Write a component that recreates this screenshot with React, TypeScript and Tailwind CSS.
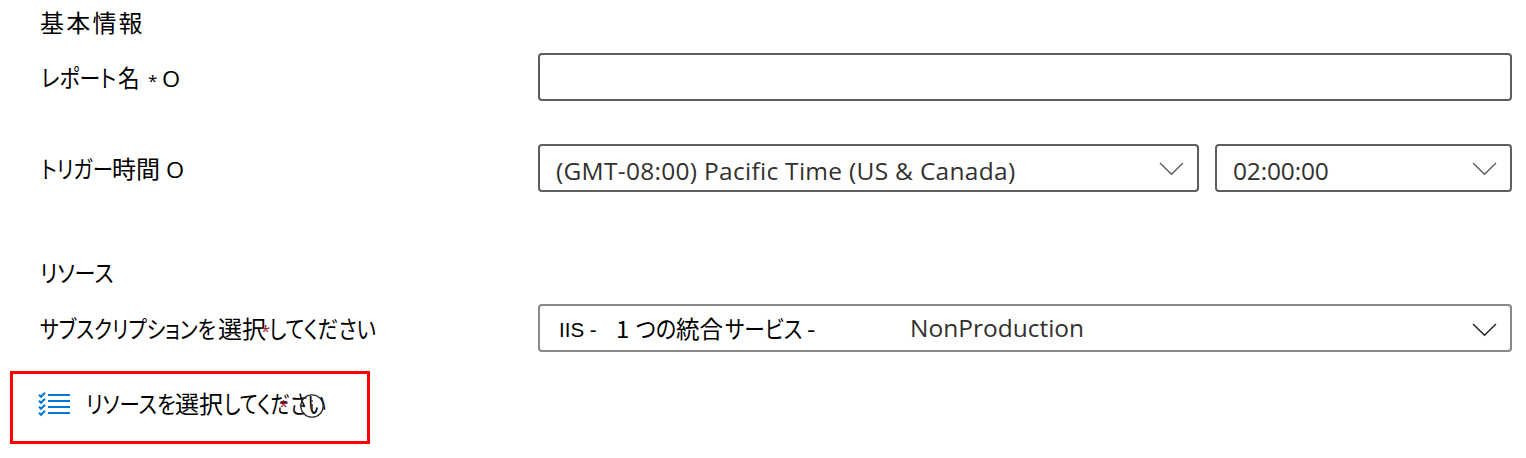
import type { ReactNode } from "react";

const jp = "font-['Noto_Sans_CJK_JP',sans-serif] text-[24px] leading-[32px] text-black";
const ui = "font-['Open_Sans',sans-serif] text-[24.5px] leading-[32px] text-[#323130]";

/** A run of glyphs in a fixed-width slot, condensed horizontally from its left edge. */
function Run({ slot, fit = "", children }: { slot: string; fit?: string; children: ReactNode }) {
  return (
    <span className={`inline-block shrink-0 whitespace-pre text-left ${slot}`}>
      <span className={`inline-block origin-left [font-feature-settings:'palt'] ${fit}`}>{children}</span>
    </span>
  );
}

function Chevron({ dark = false }: { dark?: boolean }) {
  return (
    <svg className={dark ? "mt-[3px] shrink-0" : "mt-px shrink-0"} width="25" height="14" viewBox="0 0 25 14" fill="none">
      <path d="M1 1L12.5 12.3L24 1" stroke={dark ? "#201f1e" : "#605e5c"} strokeWidth="1.4" />
    </svg>
  );
}

function Checklist() {
  return (
    <svg className="shrink-0" width="33" height="26" viewBox="0 0 33 26" fill="none" stroke="#0078d4">
      {[4, 10, 16, 22].map((y) => (
        <g key={y}>
          <path d={`M10 ${y}H32`} strokeWidth="2" />
          <path d={`M1 ${y - 0.2}L3 ${y + 1.8}L7 ${y - 2.2}`} strokeWidth="2" />
        </g>
      ))}
    </svg>
  );
}

function Required({ place }: { place: string }) {
  return <span className={`absolute font-['Open_Sans',sans-serif] text-[17px] leading-none text-[#a4262c] ${place}`}>*</span>;
}

function Hint() {
  return <span className="inline-block origin-left scale-x-[1.06] font-['Open_Sans',sans-serif] text-[22px] leading-[31px]">O</span>;
}

export default function App() {
  return (
    <main className="h-[458px] w-[1526px] overflow-hidden bg-white">
      <h2 className={`flex h-[53px] pt-[6px] pl-[40px] tracking-[2.2px] ${jp}`}>基本情報</h2>

      <div className="flex h-[91px] items-start pl-[40px]">
        <div className={`flex w-[498px] pt-[8px] ${jp}`}>
          <Run slot="ml-px w-[77px]" fit="scale-x-[0.87]">レポート</Run>
          <Run slot="w-[30px]" fit="scale-x-[0.9]">名</Run>
          <Run slot="w-[14px]"><span className="inline-block font-['Open_Sans',sans-serif] text-[17px] leading-[28px]">*</span></Run>
          <Run slot="w-[20px]"><Hint /></Run>
        </div>
        <input aria-label="レポート名" className="h-[48px] w-[974px] rounded-[4px] border-2 border-[#605e5c] bg-white px-4 outline-none" />
      </div>

      <div className="flex h-[113px] items-start pl-[40px]">
        <div className={`flex w-[498px] pt-[8px] ${jp}`}>
          <Run slot="ml-px w-[71px]" fit="scale-x-[0.85]">トリガー</Run>
          <Run slot="w-[54px]">時間</Run>
          <Run slot="w-[20px]"><Hint /></Run>
        </div>
        <div className="flex gap-[16px]">
          <button className={`flex h-[48px] w-[661px] items-center justify-between rounded-[4px] border-2 border-[#605e5c] pr-[13px] pl-[16px] tracking-[0.29px] ${ui}`}>
            <span className="whitespace-nowrap pt-[6px]">(GMT-08:00) Pacific Time (US &amp; Canada)</span>
            <Chevron />
          </button>
          <button className={`flex h-[48px] w-[297px] items-center justify-between rounded-[4px] border-2 border-[#605e5c] pr-[13px] pl-[16px] tracking-[-0.15px] ${ui}`}>
            <span className="pt-[6px]">02:00:00</span>
            <Chevron />
          </button>
        </div>
      </div>

      <h2 className={`-mt-px flex h-[48px] pl-[40px] ${jp}`}>
        <Run slot="w-[76px]" fit="scale-x-[0.88]">リソース</Run>
      </h2>

      <div className="flex h-[67px] items-start pl-[40px]">
        <div className={`relative flex w-[498px] pt-[8px] ${jp}`}>
          <Run slot="w-[178px]" fit="scale-x-[0.83]">サブスクリプションを</Run>
          <Run slot="w-[51px]">選択</Run>
          <Run slot="w-[108px]" fit="scale-x-[0.85]">してください</Run>
          <Required place="left-[221px] top-[18px]" />
        </div>
        <button className={`flex h-[48px] w-[974px] items-center justify-between rounded-[4px] border-2 border-[#8a8886] pr-[13px] pl-[18px] ${jp}`}>
          <span className="flex items-center">
            <Run slot="ml-px w-[57px]"><span className="font-['Liberation_Sans',sans-serif] text-[20.5px]">IIS -</span></Run>
            <Run slot="w-[20px]">1</Run>
            <Run slot="w-[40px]" fit="scale-x-[0.88]">つの</Run>
            <Run slot="w-[49px]" fit="scale-x-[0.98]">統合</Run>
            <Run slot="w-[82px]" fit="scale-x-[0.86]">サービス</Run>
            <Run slot="w-[103px]">-</Run>
            <span className={ui}>NonProduction</span>
          </span>
          <Chevron dark />
        </button>
      </div>

      <button className={`relative ml-[10px] flex h-[73px] w-[360px] items-center border-[3px] border-[#ff0000] pb-[8px] pl-[25px] ${jp}`}>
        <Checklist />
        <span className="relative -mt-px ml-[15px] flex">
          <Run slot="w-[89px]" fit="scale-x-[0.85]">リソースを</Run>
          <Run slot="w-[49px]">選択</Run>
          <Run slot="w-[104px]" fit="scale-x-[0.81]">してください</Run>
          <Required place="left-[193px] top-[10px]" />
          <svg className="absolute left-[213px] top-[6px]" width="26" height="26" viewBox="0 0 26 26" fill="none">
            <circle cx="13" cy="13" r="11.2" stroke="#323130" strokeWidth="1.3" />
            <path d="M13 7.3V9M13 11V18.5" stroke="#323130" strokeWidth="1.5" />
          </svg>
        </span>
      </button>
    </main>
  );
}
